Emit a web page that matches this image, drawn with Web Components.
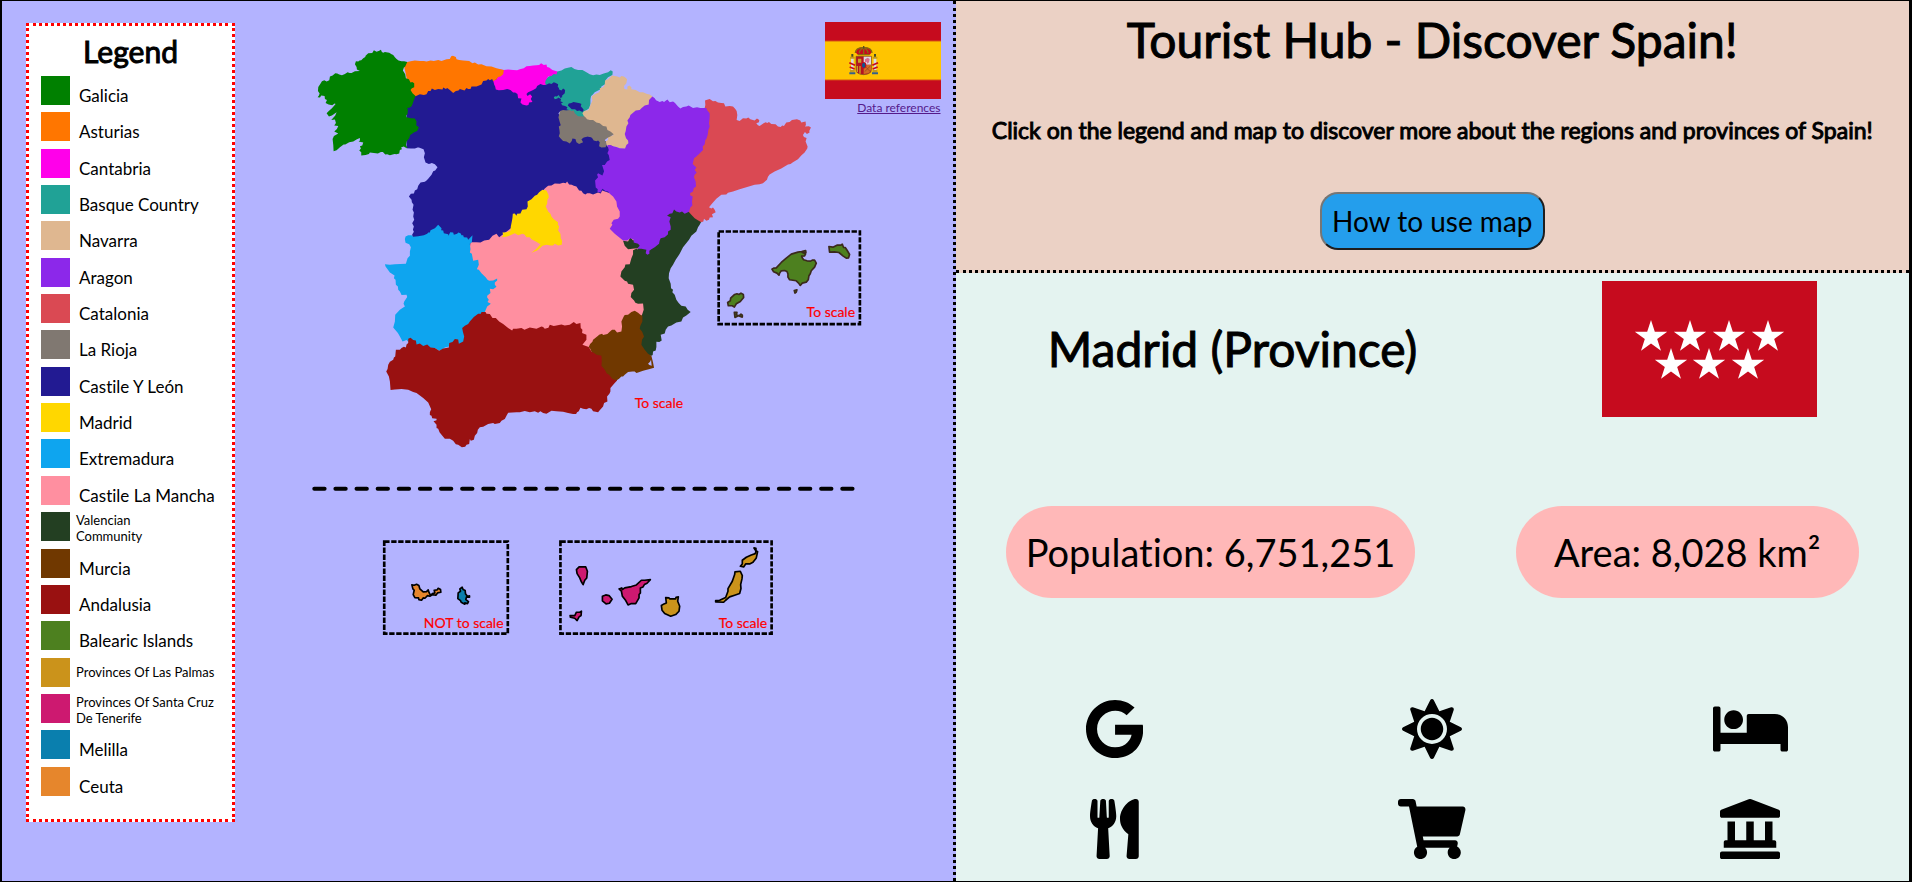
<!DOCTYPE html>
<html lang="en">
<head>
<meta charset="utf-8">
<meta name="viewport" content="width=device-width, initial-scale=1">
<title>Tourist Hub - Discover Spain!</title>
<style>
  html, body { margin: 0; }
  body { font-family: Lato, "Liberation Sans", sans-serif; font-variant-ligatures: none; color: #000; }
</style>
</head>
<body>
<tourist-app>
  <map-panel slot="left">
    <map-legend slot="legend">
      <legend-item color="#008000">Galicia</legend-item>
      <legend-item color="#ff7600">Asturias</legend-item>
      <legend-item color="#ff00ea">Cantabria</legend-item>
      <legend-item color="#20a296">Basque Country</legend-item>
      <legend-item color="#dfb790">Navarra</legend-item>
      <legend-item color="#8c28ea">Aragon</legend-item>
      <legend-item color="#da4953">Catalonia</legend-item>
      <legend-item color="#807871">La Rioja</legend-item>
      <legend-item color="#221a92">Castile Y León</legend-item>
      <legend-item color="#ffd700">Madrid</legend-item>
      <legend-item color="#0ea5ef">Extremadura</legend-item>
      <legend-item color="#ff8fa0">Castile La Mancha</legend-item>
      <legend-item color="#233f22" small>Valencian<br>Community</legend-item>
      <legend-item color="#703800">Murcia</legend-item>
      <legend-item color="#991111">Andalusia</legend-item>
      <legend-item color="#4d801f">Balearic Islands</legend-item>
      <legend-item color="#cb931b" small>Provinces Of Las Palmas</legend-item>
      <legend-item color="#cd1970" small>Provinces Of Santa Cruz De Tenerife</legend-item>
      <legend-item color="#0a7fae">Melilla</legend-item>
      <legend-item color="#e6862c">Ceuta</legend-item>
    </map-legend>
    <spain-map slot="map"></spain-map>
    <spain-flag slot="flag"></spain-flag>
  </map-panel>
  <hub-header slot="right">
    <span slot="title">Tourist Hub - Discover Spain!</span>
    <span slot="lead">Click on the legend and map to discover more about the regions and provinces of Spain!</span>
    <span slot="action">How to use map</span>
  </hub-header>
  <region-info slot="right">
    <span slot="name">Madrid (Province)</span>
    <stat-pill slot="stats">Population: 6,751,251</stat-pill>
    <stat-pill slot="stats">Area: 8,028 km²</stat-pill>
    <icon-link slot="links" icon="google" label="Search"></icon-link>
    <icon-link slot="links" icon="sun" label="Weather"></icon-link>
    <icon-link slot="links" icon="bed" label="Hotels"></icon-link>
    <icon-link slot="links" icon="food" label="Restaurants"></icon-link>
    <icon-link slot="links" icon="cart" label="Shopping"></icon-link>
    <icon-link slot="links" icon="landmark" label="Museums"></icon-link>
  </region-info>
</tourist-app>

<script>
function define(name, html, setup) {
  const template = document.createElement('template');
  template.innerHTML = html;
  customElements.define(name, class extends HTMLElement {
    constructor() {
      super();
      this.attachShadow({ mode: 'open' }).append(template.content.cloneNode(true));
    }
    connectedCallback() { if (setup) setup(this, this.shadowRoot); }
  });
}

define('tourist-app', `
  <style>
    :host { display: flex; box-sizing: border-box; min-height: 100vh; border: solid #000; border-width: 1px 3px 1px 2px; }
    .half { flex: 1 1 0; min-width: 0; display: flex; flex-direction: column; }
  </style>
  <div class="half"><slot name="left"></slot></div>
  <main class="half"><slot name="right"></slot></main>`);

define('map-panel', `
  <style>
    :host { flex: 1; display: grid; grid-template-columns: auto minmax(0, 1fr); border-right: 3px dotted #000; background: #b3b3ff; }
    .legend { display: flex; padding: 22px 0 59px 24px; }
    .map, .flag { grid-column: 2; grid-row: 1; }
    .flag { justify-self: end; align-self: start; padding: 21px 12px 0 0; }
  </style>
  <div class="legend"><slot name="legend"></slot></div>
  <div class="map"><slot name="map"></slot></div>
  <div class="flag"><slot name="flag"></slot></div>`);

define('map-legend', `
  <style>
    :host { display: flex; flex-direction: column; box-sizing: border-box; width: 209px; padding: 7px 12px 16px; border: 3px dotted #f00; background: #fff; }
    h2 { margin: 0 0 7px; font-size: 30px; line-height: 36px; font-weight: 400; -webkit-text-stroke: 1px; text-align: center; }
    .list { flex: 1; display: grid; grid-auto-rows: 1fr; }
  </style>
  <h2>Legend</h2>
  <div class="list"><slot></slot></div>`);

define('legend-item', `
  <style>
    :host { display: block; }
    button { display: flex; align-items: flex-start; width: 100%; padding: 0; border: 0; background: none; font: inherit; color: inherit; text-align: left; cursor: pointer; }
    .swatch { flex: none; width: 29px; height: 29px; background: var(--swatch); }
    .label { padding: 10px 0 0 9px; margin-right: -12px; font-size: 17px; line-height: 20px; }
    :host([small]) .label { display: flex; align-items: center; min-height: 29px; padding: 0 0 0 6px; font-size: 13px; line-height: 16px; }
  </style>
  <button type="button"><span class="swatch"></span><span class="label"><span><slot></slot></span></span></button>`,
  (el) => el.style.setProperty('--swatch', el.getAttribute('color')));

define('spain-flag', `
  <style>
    :host { display: flex; flex-direction: column; align-items: flex-end; }
    svg { display: block; width: 116px; height: 77px; }
    a { font-size: 12px; line-height: 18px; color: #551a8b; text-decoration: underline; }
  </style>
  <svg viewBox="0 0 348 231" role="img" aria-label="Flag of Spain">
    <path fill="#c60b1e" d="M0 0h348v231H0z"/>
    <path fill="#ffc400" d="M0 58h348v115H0z"/>
    <path fill="#e88c0b" d="M0 56h348v3H0zM0 172h348v3H0z"/>
    <g>
      <path fill="#c60b1e" d="M93 92q-2-15 23-16q25 1 23 16l-5 6H98z"/>
      <path fill="none" stroke="#8a6a10" stroke-width="4" d="M91 93q0-16 25-17q25 1 25 17M103 94q0-11 13-17M129 94q0-11-13-17M116 74v22M99 98h34"/>
      <path fill="#5c4a20" d="M114 72h4v8h-4z"/>
      <path fill="#d8dadd" d="M78 108h8v38h-8zM146 108h8v38h-8z"/>
      <path fill="#c59a1b" d="M75 104h14v6H75zM75 144h14v6H75zM143 104h14v6h-14zM143 144h14v6h-14z"/>
      <path fill="#335f8c" d="M73 151h18v6H73zM141 151h18v6h-18z"/>
      <path fill="#444b2c" d="M79 96h6v8h-6zM147 96h6v8h-6z"/>
      <path fill="none" stroke="#c60b1e" stroke-width="5" d="M73 122l17 8M74 135l15 6M159 122l-17 8M158 135l-15 6"/>
      <path fill="#b41320" stroke="#7c5a1c" stroke-width="2" d="M93 103h46v40q0 14-23 15q-23-1-23-15z"/>
      <path fill="#dedbe1" d="M116 104h22v24h-22z"/>
      <path fill="#d96f91" d="M120 112l8-5 6 4-2 10-5 4-2-6-5 2z"/>
      <path fill="#c9a227" d="M99 110h10v12H99zM95 132h4v18h-4zM103 132h4v23h-4z"/>
      <path fill="#d26d22" d="M116 129h22v13q0 8-9 12l-13 2z"/>
      <path stroke="#8c3d22" stroke-width="2" fill="none" d="M119 132l17 17M136 132l-17 17"/>
      <ellipse cx="116" cy="130" rx="8" ry="10" fill="#c60b1e"/>
      <ellipse cx="116" cy="130" rx="5" ry="8" fill="#10558f"/>
    </g>
  </svg>
  <a href="#references">Data references</a>`);

define('spain-map', `
  <style>
    :host { display: block; }
    svg { display: block; width: 100%; height: auto; }
    text { font-size: 14px; fill: #f00; stroke: #f00; stroke-width: .2px; }
    .frame { fill: none; stroke: #000; stroke-width: 8; stroke-dasharray: 16 5; }
    .isle { stroke: #000; stroke-width: 5; stroke-linejoin: round; }
  </style>
  <svg viewBox="235 1 718 659" role="img" aria-label="Map of the regions of Spain">
    <g transform="translate(300 30) scale(.33333)">
      <path fill="#20a296" d="M760 130L773 125 785 122 795 116 808 113 815 111 824 117 835 120 848 120 860 127 870 133 880 136 890 134 900 135 912 131 925 127 933 121 939 125 938 135 925 142 918 150 917 162 905 170 903 178 898 180 885 187 878 195 874 198 872 208 872 222 868 235 860 241 851 246 860 258 855 262 840 262 825 258 800 250 740 220 720 160z"/>
      <path fill="#221a92" d="M320 160L320 355 333 356 345 356 353 353 357 353 371 358 375 370 372 382 377 398 387 402 392 401 396 399 405 403 413 412 406 422 400 424 395 435 385 447 380 452 375 456 362 458 355 468 352 478 345 482 342 491 333 492 327 500 335 510 336 517 341 525 338 540 342 548 340 560 343 570 337 580 342 590 339 600 342 606 337 614 345 680 520 690 600 650 700 600 800 560 880 560 910 560 940 440 940 340 800 300 776 250 782 243 812 242 800 238 803 232 796 228 787 226 784 220 790 218 782 214 784 207 775 203 773 206 765 208 762 202 766 199 771 200 777 195 782 204 788 201 786 198 795 190 796 180 790 176 785 182 777 178 778 174 774 171 775 163 768 159 762 157 755 162 748 160 738 165 700 130 560 140 340 160z"/>
      <path fill="#221a92" d="M804 227L807 221 815 219 821 216 829 218 840 220 845 222 843 229 849 236 852 240 848 246 839 242 832 243 826 238 816 238z"/>
      <path fill="#ff00ea" d="M600 119L612 120 625 119 640 120 652 121 660 118 672 115 680 109 690 108 700 107 710 106 718 105 724 100 732 105 740 104 742 111 748 113 758 120 773 125 770 134 762 132 755 138 745 140 741 147 738 150 736 157 738 165 730 165 722 162 712 168 709 175 700 180 692 184 685 187 680 192 683 198 691 193 697 200 693 207 698 216 688 218 686 225 680 227 668 224 662 218 663 213 665 206 655 205 653 192 646 188 640 188 632 180 622 177 610 180 597 181 588 179 586 170 583 164 580 152 590 148z"/>
      <path fill="#ff7600" d="M310 96L322 96 332 94 345 92 360 93 372 93 380 95 392 92 402 93 415 90 425 93 440 88 450 87 454 79 459 77 468 81 470 88 478 90 490 92 508 93 518 100 525 98 535 104 545 103 560 109 575 110 590 115 612 120 610 133 602 140 595 141 590 148 580 154 577 147 570 151 565 147 560 152 550 153 545 164 530 170 515 170 512 177 505 177 500 174 494 182 480 177 476 182 468 183 460 189 450 180 442 174 438 177 430 173 428 179 415 177 405 180 396 176 392 183 385 183 380 193 372 195 360 193 347 199 330 190z"/>
      <path fill="#008000" d="M322 96L313 94 305 94 296 92 290 87 285 82 280 75 275 73 268 68 255 66 250 68 246 66 243 59 238 62 230 65 222 61 217 69 205 70 197 77 196 81 190 85 184 91 179 92 175 95 168 94 165 103 170 111 171 119 180 123 165 124 155 129 149 129 143 127 135 132 126 136 118 134 112 131 106 130 98 137 90 140 88 151 80 155 73 151 66 154 61 162 55 171 54 183 59 191 57 197 53 202 60 203 64 197 74 198 75 207 81 210 77 219 86 224 97 226 104 221 107 222 96 235 85 245 80 250 87 260 96 257 110 247 106 257 94 270 105 269 108 279 103 287 115 288 111 297 103 305 115 311 102 318 98 327 100 345 101 364 110 361 120 352 131 344 136 344 148 337 160 335 171 328 180 324 180 332 176 335 190 338 187 347 180 349 183 356 178 362 184 367 184 377 197 375 207 372 210 368 222 369 234 371 243 366 249 366 256 374 262 373 270 376 284 372 290 373 298 371 300 360 306 358 304 352 312 350 316 353 323 354 318 345 321 333 328 325 331 315 343 307 352 303 357 292 349 286 350 275 345 266 333 265 320 262 319 257 323 252 324 240 322 234 330 233 335 229 338 222 342 210 347 198 338 190 332 180 336 175 343 172 343 160 337 156 332 158 327 148 318 145 316 133 309 122 312 113 316 110z"/>
      <path fill="#ff8fa0" d="M512 637L530 637 542 638 553 632 568 630 578 618 590 612 598 622 640 590 735 476 745 468 755 467 765 461 780 462 790 459 798 460 802 455 808 464 816 465 822 468 830 470 838 482 845 483 850 490 857 494 862 490 870 490 880 494 895 488 903 491 907 482 960 500 1010 640 1040 670 1040 860 990 920 910 960 850 970 810 920 600 920 500 860 500 740z"/>
      <path fill="#ffd700" d="M728 480L740 482 746 495 747 503 743 510 742 522 738 530 745 545 752 552 755 560 762 568 775 577 774 584 778 590 775 602 782 612 783 625 787 633 786 645 775 647 765 642 760 647 752 647 740 645 728 648 720 655 712 662 695 669 710 657 722 643 708 635 695 628 690 622 680 622 674 614 668 612 655 616 645 610 635 615 622 620 607 622 610 615 608 608 620 607 632 603 633 590 636 575 638 564 639 552 645 551 650 558 652 552 662 551 667 540 680 538 684 530 683 515 695 508 705 498 712 495 718 487z"/>
    </g>
    <g transform="translate(370 210) scale(.33333)">
      <path fill="#0ea5ef" d="M107 80L115 76 125 76 130 81 145 79 162 76 172 72 175 68 180 68 182 61 195 55 200 50 205 45 215 55 214 61 220 62 222 70 235 73 236 78 241 67 250 68 252 75 262 72 265 68 272 70 275 76 280 76 282 82 292 83 295 90 308 76 306 97 300 102 302 118 300 128 306 132 310 153 325 150 327 165 321 178 327 180 335 190 348 203 353 210 358 213 370 212 382 206 382 212 375 218 375 225 380 231 370 238 360 237 362 250 352 258 352 263 357 270 353 277 363 282 352 290 345 307 320 350 285 395 265 405 255 395 237 410 225 413 215 421 208 423 195 415 182 415 150 430 122 402 110 391 98 395 90 380 84 370 70 353 75 335 76 315 90 300 100 293 105 290 101 282 103 275 112 262 110 255 95 256 90 245 85 240 84 230 78 225 77 210 72 205 74 197 60 188 53 178 47 170 45 163 60 165 75 163 108 162 113 145 120 138 120 125 123 112 118 103 107 99 105 88z"/>
      <path fill="#991111" d="M115 387L122 384 130 391 138 392 140 404 150 401 160 409 172 404 182 413 195 415 208 423 220 416 237 413 238 400 248 397 255 388 265 389 267 402 280 395 283 380 279 365 277 355 285 348 295 343 300 335 312 322 325 312 333 312 335 307 347 307 350 312 360 313 368 325 378 325 388 335 400 343 415 355 427 362 430 357 440 357 455 355 464 360 480 353 500 357 515 350 520 352 525 357 536 354 540 345 552 349 560 347 575 344 585 347 600 345 612 337 620 343 632 340 633 355 638 360 637 370 650 375 650 390 638 405 657 412 665 425 690 430 720 450 742 512 735 520 722 535 722 545 719 552 712 560 713 575 703 580 700 590 690 602 685 608 670 605 665 597 658 595 650 599 640 597 632 594 627 605 622 608 619 613 610 613 595 610 580 606 560 605 545 603 530 612 520 610 512 605 505 609 495 605 480 608 465 604 450 608 440 608 415 609 410 618 405 628 395 633 390 640 375 643 370 640 355 643 340 651 330 653 324 660 322 670 315 678 312 690 303 693 300 688 298 703 290 705 286 711 276 713 265 705 258 704 250 693 240 687 225 687 215 675 209 668 205 657 200 655 200 645 191 635 200 632 200 627 187 626 185 618 180 616 180 608 184 599 175 578 160 565 140 550 130 547 115 540 95 538 75 539 62 541 60 515 57 500 49 485 53 478 55 465 60 456 70 450 72 443 76 440 78 420 90 420 95 415 102 411 108 413 110 404 115 400z"/>
      <path fill="#233f22" d="M850 -10L970 -10 995 35 990 45 985 52 980 65 965 78 958 90 940 112 930 132 918 150 910 165 903 175 898 190 897 205 903 222 904 235 910 240 908 247 915 255 920 270 927 280 935 288 948 290 954 300 963 307 950 317 940 323 935 335 920 338 905 347 895 350 888 360 885 371 873 375 876 392 869 397 860 396 860 412 858 422 850 425 849 436 845 438 810 430 800 330 816 318 822 300 820 281 805 282 797 279 793 272 783 262 785 250 793 240 790 225 775 222 772 215 765 213 752 200 755 185 765 172 767 164 780 163 785 145 790 133 790 121 800 117 803 119 806 115 795 116 775 118 765 108 760 93 775 95 782 82 790 92 795 90 805 100 840 100z"/>
      <path fill="#703800" d="M657 412L661 403 668 396 670 390 685 378 688 375 697 372 700 376 713 373 720 366 727 360 735 360 742 368 755 365 757 350 755 335 762 320 765 316 775 315 785 307 795 303 805 309 812 315 818 318 818 335 812 348 810 357 817 365 823 380 817 390 815 405 825 420 835 432 845 438 848 450 850 458 853 474 840 478 820 483 805 488 800 490 795 485 788 485 775 487 765 495 760 500 755 500 748 507 740 512 735 510 727 507 718 495 711 491 705 480 695 468 696 455 695 438 680 435 675 431 665 425 662 418z"/>
      <path fill="#b3b3ff" d="M844 450l2 18-7-2-4-4 6-6z"/>
    </g>
    <g transform="translate(560 30) scale(.33333)">
      <path fill="#da4953" d="M435 234L437 225 436 212 440 210 450 207 460 214 467 213 475 218 485 219 493 220 497 230 510 228 520 230 527 237 531 243 533 255 531 270 540 273 550 265 560 266 566 263 572 268 585 272 592 266 599 270 598 277 590 280 595 286 600 288 612 280 618 277 623 279 628 276 635 282 648 283 655 290 663 291 668 287 673 288 680 278 690 276 697 270 712 268 722 272 725 278 738 275 739 285 736 290 748 289 754 293 749 303 750 308 742 312 736 306 730 315 733 321 741 324 738 335 744 350 743 356 735 368 725 377 715 388 700 397 693 402 685 404 665 416 645 425 630 434 625 441 622 450 610 460 600 463 585 465 560 472 540 478 520 485 505 489 500 494 485 495 470 507 458 520 448 532 455 536 460 533 465 540 468 547 457 553 460 562 450 563 448 570 440 573 433 567 431 575 425 577 417 573 412 570 405 565 400 560 395 555 387 546 360 500 380 300z"/>
      <path fill="#dfb790" d="M157 137L165 138 173 140 180 143 185 138 192 140 197 143 202 148 200 160 193 168 194 177 203 179 203 170 209 167 215 172 215 178 228 180 240 187 250 187 262 192 270 194 278 200 280 340 196 356 187 357 180 355 170 351 160 349 152 347 142 350 138 340 137 335 145 330 145 320 152 318 162 315 100 275 78 268 74 262 68 250 72 245 80 241 84 242 88 237 92 225 98 212 96 200 105 193 118 187 121 182 120 175 130 172 135 165 136 152 145 148z"/>
      <path fill="#807871" d="M1 243L10 240 20 242 30 240 35 243 42 242 45 250 55 259 75 260 82 268 90 270 100 270 110 278 120 280 130 288 140 290 143 300 152 305 162 313 152 320 145 323 135 330 140 340 138 352 125 353 118 349 120 337 115 332 110 334 102 332 96 323 85 320 72 323 65 328 70 337 58 342 50 337 47 327 38 326 36 333 30 341 20 335 10 333 2 325 -3 319 0 310 -1 300 -3 290 3 286 0 277 -4 262z"/>
      <path fill="#8c28ea" d="M278 200L285 205 289 211 300 216 308 213 313 216 323 209 330 217 340 215 346 219 355 230 362 236 370 231 380 230 387 227 395 231 400 234 412 232 422 234 440 234 442 240 450 250 450 262 448 280 450 290 446 300 444 315 440 327 437 330 435 343 429 350 430 360 418 372 410 380 403 385 399 402 410 413 405 420 411 428 404 436 403 443 408 455 409 470 402 475 400 485 391 490 392 497 399 500 397 515 398 527 392 533 388 546 375 552 367 545 360 548 350 545 343 539 338 550 330 552 322 558 333 562 329 575 333 590 333 600 325 605 325 613 315 622 303 625 300 632 298 642 285 652 275 658 269 663 269 672 263 675 258 670 260 660 245 657 232 657 240 648 235 642 222 638 222 630 212 625 202 632 190 632 178 622 165 612 150 597 158 585 155 580 162 570 175 567 180 560 180 545 172 530 170 515 160 500 150 492 145 485 138 484 128 477 125 482 122 488 113 486 114 478 108 473 106 452 115 442 112 435 115 430 128 437 133 424 127 405 135 405 142 395 150 390 147 375 143 370 147 360 143 345 152 345 160 349 170 351 180 355 196 356 200 345 206 340 205 332 199 325 195 312 198 303 200 290 206 280 203 272 210 262 212 255 228 242 240 240 245 235 255 227 267 224 268 210z"/>
    </g>
    <g transform="translate(700 200) scale(.33333)">
      <path class="frame" d="M57 95H481V373H57z"/>
      <g fill="#4d801f" stroke="#3b2a1c" stroke-width="5" stroke-linejoin="round">
        <path d="M217 208L222 205 230 204 245 188 260 175 275 163 295 157 306 155 318 152 319 158 308 158 318 162 315 168 306 169 308 174 312 180 322 183 333 184 338 181 345 181 350 190 345 202 335 213 332 222 328 228 326 240 320 247 308 250 302 257 297 250 290 243 270 240 265 232 265 222 262 215 255 212 245 213 240 220 238 226 232 220 222 216z"/>
        <path d="M388 140L400 142 412 136 424 136 428 133 432 143 437 143 443 152 450 164 447 174 440 175 430 168 418 158 405 156 390 157z"/>
        <path d="M84 308L92 303 93 295 105 284 112 282 118 284 124 280 131 284 132 293 122 305 110 312 104 322 98 318 86 318z"/>
        <path d="M104 338L112 338 110 345 118 348 124 343 128 346 128 352 116 348 106 353z"/>
        <path d="M284 272L292 270 290 277 286 280z"/>
      </g>
    </g>
    <g transform="translate(370 470) scale(.33333)">
      <path stroke="#000" stroke-width="12" stroke-linecap="round" stroke-dasharray="31 32.4" d="M-167 57H1450"/>
      <path class="frame" d="M43 216H414V492H43zM572 216H1206V492H572z"/>
      <g class="isle">
        <path fill="#e6862c" d="M126 346L133 347 140 344 147 348 150 358 160 367 170 366 175 361 178 370 182 377 188 372 195 370 193 362 202 361 205 356 212 360 213 368 203 370 198 377 188 375 180 380 173 378 165 386 160 385 155 392 147 390 146 385 135 384 130 375 133 362 129 358z"/>
        <path fill="#0a7fae" d="M277 353L280 360 286 363 287 373 293 380 299 379 299 383 290 382 288 390 296 396 293 402 285 400 285 404 274 398 272 393 264 387 265 370 272 365 270 358z"/>
        <path fill="#cd1970" d="M620 300L628 292 648 292 653 305 651 325 645 332 640 345 634 335 630 325 622 312zM698 380l10-4 10 2 9 11-8 12-10 2-11-9zM601 438L615 438 620 428 630 428 635 425 634 438 628 442 622 453 615 446 602 443zM748 358L756 355 758 360 765 355 785 351 800 346 815 332 825 332 842 330 832 341 824 345 820 352 812 355 812 370 808 375 808 385 798 402 785 402 775 406 768 393 758 380 755 365z"/>
        <path fill="#cb931b" d="M888 384L898 385 900 388 918 388 919 383 926 382 924 395 930 410 928 425 918 435 903 440 885 432 877 422 875 408 883 403 890 400zM1096 307L1112 305 1118 318 1117 328 1113 345 1114 357 1110 372 1095 377 1080 382 1068 392 1062 398 1038 397 1038 393 1050 392 1068 384 1075 365 1075 357 1088 335 1095 315zM1153 235L1159 236 1159 243 1164 246 1160 265 1150 278 1140 283 1128 283 1122 292 1112 290 1118 283 1118 272 1130 263 1145 256 1157 252 1159 244z"/>
      </g>
    </g>
    <text x="635" y="408">To scale</text>
    <text x="807" y="317">To scale</text>
    <text x="424" y="628">NOT to scale</text>
    <text x="719" y="628">To scale</text>
  </svg>`);

define('hub-header', `
  <style>
    :host { display: flex; flex-direction: column; align-items: center; padding: 9px 16px 20px; border-bottom: 3px dotted #000; background: #ebd1c5; text-align: center; }
    h1, p { margin: 0; font-weight: 400; -webkit-text-stroke: 1px; }
    h1 { font-size: 48px; line-height: 60px; }
    p { margin: 46px 0 48px; font-size: 23px; line-height: 28px; }
    button { padding: 9px 10px; border: 2px solid; border-color: #767676 #1e1e1e #1e1e1e #767676; border-radius: 18px; background: #249eec; font: inherit; font-size: 28px; line-height: 36px; color: #000; cursor: pointer; }
  </style>
  <h1><slot name="title"></slot></h1>
  <p><slot name="lead"></slot></p>
  <button type="button"><slot name="action"></slot></button>`);

define('region-info', `
  <style>
    :host { flex: 1; display: block; padding: 8px 0 21px; background: #e4f3f0; }
    .row { display: flex; justify-content: space-around; align-items: center; }
    h2 { margin: 0; font-size: 48px; line-height: 60px; font-weight: 400; -webkit-text-stroke: 1px; }
    svg { display: block; width: 215px; height: 136px; }
    .stats { margin-top: 89px; }
    .links { display: grid; grid-template-columns: repeat(3, 1fr); row-gap: 40px; margin-top: 101px; }
  </style>
  <div class="row">
    <h2><slot name="name"></slot></h2>
    <svg viewBox="0 0 215 136" role="img" aria-label="Flag of Madrid">
      <defs><path id="star" d="M0-17L3.82-5.25H16.17L6.18 2.01 9.99 13.75 0 6.5-9.99 13.75-6.18 2.01-16.17-5.25H-3.82z"/></defs>
      <path fill="#c60b1e" d="M0 0h215v136H0z"/>
      <g fill="#fff">
        <use href="#star" x="49" y="56"/><use href="#star" x="88" y="56"/><use href="#star" x="127" y="56"/><use href="#star" x="166" y="56"/>
        <use href="#star" x="69" y="84"/><use href="#star" x="107" y="84"/><use href="#star" x="146" y="84"/>
      </g>
    </svg>
  </div>
  <div class="row stats"><slot name="stats"></slot></div>
  <nav class="links"><slot name="links"></slot></nav>`);

define('stat-pill', `
  <style>
    :host { display: block; box-sizing: border-box; min-width: 36%; padding: 22px 20px; border-radius: 46px; background: #ffb8b8; font-size: 38px; line-height: 48px; text-align: center; }
  </style>
  <slot></slot>`);

const ICONS = {
  google: [488, 'M488 261.8C488 403.3 391.1 504 248 504 110.8 504 0 393.2 0 256S110.8 8 248 8c66.8 0 123 24.5 166.3 64.9l-67.5 64.9C258.5 52.6 94.3 116.6 94.3 256c0 86.5 69.1 156.6 153.7 156.6 98.2 0 135-70.4 140.8-106.9H248v-85.3h236.1c2.3 12.7 3.9 24.9 3.9 41.4z'],
  sun: [512, 'M256 160c-52.9 0-96 43.1-96 96s43.1 96 96 96 96-43.1 96-96-43.1-96-96-96zm246.4 80.5l-94.7-47.3 33.5-100.4c4.5-13.6-8.4-26.5-21.9-21.9l-100.4 33.5-47.4-94.8c-6.4-12.8-24.6-12.8-31 0l-47.3 94.7L92.7 70.8c-13.6-4.5-26.5 8.4-21.9 21.9l33.5 100.4-94.7 47.4c-12.8 6.4-12.8 24.6 0 31l94.7 47.3-33.5 100.5c-4.5 13.6 8.4 26.5 21.9 21.9l100.4-33.5 47.3 94.7c6.4 12.8 24.6 12.8 31 0l47.3-94.7 100.4 33.5c13.6 4.5 26.5-8.4 21.9-21.9l-33.5-100.4 94.7-47.3c13-6.5 13-24.7.2-31.1zm-155.9 106c-49.9 49.9-131.1 49.9-181 0-49.9-49.9-49.9-131.1 0-181 49.9-49.9 131.1-49.9 181 0 49.9 49.9 49.9 131.1 0 181z'],
  bed: [640, 'M176 256c44.11 0 80-35.89 80-80s-35.89-80-80-80-80 35.89-80 80 35.89 80 80 80zm352-128H304c-8.84 0-16 7.16-16 16v144H64V80c0-8.84-7.16-16-16-16H16C7.16 64 0 71.16 0 80v352c0 8.84 7.16 16 16 16h32c8.84 0 16-7.16 16-16v-48h512v48c0 8.84 7.16 16 16 16h32c8.84 0 16-7.16 16-16V240c0-61.86-50.14-112-112-112z'],
  food: [416, 'M207.9 15.2c.8 4.7 16.1 94.5 16.1 128.8 0 52.3-27.8 89.6-68.9 104.6L168 486.7c.7 13.7-10.2 25.3-24 25.3H80c-13.7 0-24.7-11.5-24-25.3l12.9-238.1C27.7 233.6 0 196.2 0 144 0 109.6 15.3 19.9 16.1 15.2 19.3-5.1 61.4-5.4 64 16.3v141.2c1.3 3.4 15.1 3.2 16 0 1.4-25.3 7.9-139.2 8-141.8 3.3-20.8 44.7-20.8 47.9 0 .2 2.7 6.6 116.5 8 141.8.9 3.2 14.8 3.4 16 0V16.3c2.6-21.6 44.8-21.4 48-1.1zm119.2 285.7l-15 185.1c-1.2 14 9.9 26 23.9 26h56c13.3 0 24-10.7 24-24V24c0-13.2-10.7-24-24-24-82.5 0-221.4 178.5-64.9 300.9z'],
  cart: [576, 'M528.12 301.319l47.273-208C578.806 78.301 567.391 64 551.99 64H159.208l-9.166-44.81C147.758 8.021 137.93 0 126.529 0H24C10.745 0 0 10.745 0 24v16c0 13.255 10.745 24 24 24h69.883l70.248 343.435C147.325 417.1 136 435.222 136 456c0 30.928 25.072 56 56 56s56-25.072 56-56c0-15.674-6.447-29.835-16.824-40h209.647C430.447 426.165 424 440.326 424 456c0 30.928 25.072 56 56 56s56-25.072 56-56c0-22.172-12.888-41.332-31.579-50.405l5.517-24.276c3.413-15.018-8.002-29.319-23.403-29.319H218.117l-6.545-32h293.145c11.206 0 20.92-7.754 23.403-18.681z'],
  landmark: [512, 'M501.62 92.11L267.24 2.04a31.958 31.958 0 0 0-22.47 0L10.38 92.11A16.001 16.001 0 0 0 0 107.09V144c0 8.84 7.16 16 16 16h480c8.84 0 16-7.16 16-16v-36.91c0-6.67-4.14-12.64-10.38-14.98zM64 192v160H48c-8.84 0-16 7.16-16 16v48h448v-48c0-8.84-7.16-16-16-16h-16V192h-64v160h-96V192h-64v160h-96V192H64zm432 256H16c-8.84 0-16 7.16-16 16v32c0 8.84 7.16 16 16 16h480c8.84 0 16-7.16 16-16v-32c0-8.84-7.16-16-16-16z']
};

define('icon-link', `
  <style>
    :host { display: flex; justify-content: center; }
    a { display: block; color: #000; }
    svg { display: block; height: 60px; width: auto; fill: currentColor; }
  </style>
  <a href="#"><svg aria-hidden="true"><path/></svg></a>`,
  (el, root) => {
    const [width, d] = ICONS[el.getAttribute('icon')];
    root.querySelector('a').setAttribute('aria-label', el.getAttribute('label'));
    root.querySelector('svg').setAttribute('viewBox', '0 0 ' + width + ' 512');
    root.querySelector('path').setAttribute('d', d);
  });
</script>
</body>
</html>
